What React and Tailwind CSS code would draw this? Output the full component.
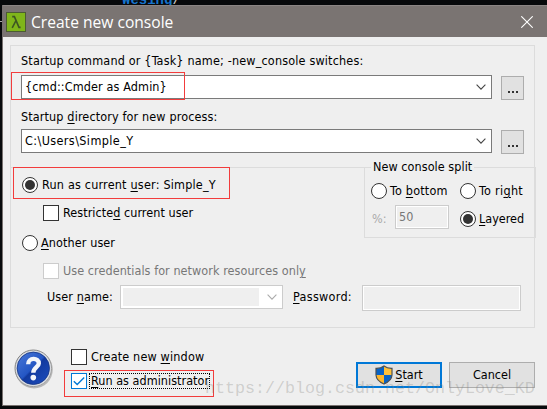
const ui = "whitespace-pre font-['DejaVu_Sans_Condensed','DejaVu_Sans',sans-serif] [font-stretch:condensed] text-[12.5px] leading-4";

function Label({ text, hot, color = "text-black", className = "" }) {
  const i = hot === undefined ? -1 : hot;
  return (
    <span className={`${ui} ${color} ${className}`}>
      {i < 0 ? text : (
        <>
          {text.slice(0, i)}
          <span className="underline decoration-1 underline-offset-2">{text[i]}</span>
          {text.slice(i + 1)}
        </>
      )}
    </span>
  );
}

function Radio({ checked }) {
  return (
    <span className="flex size-4 shrink-0 items-center justify-center rounded-full border border-[#333] bg-white">
      {checked && <span className="size-[10px] rounded-full bg-[#333]" />}
    </span>
  );
}

function Check({ className = "border-[#333]", checked }) {
  return (
    <span className={`flex size-4 shrink-0 items-center justify-center border bg-white ${className}`}>
      {checked && (
        <svg className="size-[14px] shrink-0" viewBox="0 0 14 14" fill="none" stroke="#0078d7" strokeWidth="1.4">
          <path d="M1.8 7.2 5.2 10.6 12.2 3.5" />
        </svg>
      )}
    </span>
  );
}

function Chevron({ color = "#444" }) {
  return (
    <svg className="h-[6px] w-[10px] shrink-0" viewBox="0 0 10 6" fill="none" stroke={color} strokeWidth="1.1">
      <path d="M.6.7 5 5.1 9.4.7" />
    </svg>
  );
}

function Combo({ text, className }) {
  return (
    <div className="flex h-[25px]">
      <div className="flex h-6 w-[471px] items-center justify-between border border-[#7a7a7a] bg-white pl-[3px] pr-[5px]">
        <Label text={text} className={className} />
        <Chevron />
      </div>
      <div className="ml-[9px] mt-px flex h-6 w-[23px] items-end justify-center gap-[2px] border border-[#adadad] bg-[#e1e1e1] pb-[6px]">
        <i className="size-[2px] bg-[#333]" />
        <i className="size-[2px] bg-[#333]" />
        <i className="size-[2px] bg-[#333]" />
      </div>
    </div>
  );
}

function HelpIcon() {
  return (
    <svg className="size-10" viewBox="0 0 40 40">
      <defs>
        <linearGradient id="ball" x1="0" y1="0" x2="1" y2="1">
          <stop offset="0" stopColor="#4b79d8" />
          <stop offset=".48" stopColor="#2456c4" />
          <stop offset=".52" stopColor="#123a9f" />
          <stop offset="1" stopColor="#1d4ec0" />
        </linearGradient>
        <linearGradient id="rim" x1="0" y1="0" x2="1" y2="1">
          <stop offset="0" stopColor="#777" />
          <stop offset="1" stopColor="#aaa" />
        </linearGradient>
      </defs>
      <circle cx="20" cy="20.6" r="18.8" fill="#b8b8b8" />
      <circle cx="19.3" cy="19.3" r="18.3" fill="#d9dce1" stroke="url(#rim)" strokeWidth="1" />
      <circle cx="19.3" cy="19.3" r="16.2" fill="url(#ball)" stroke="#163684" strokeWidth=".8" />
      <path d="M14.2 15.3C14 8.2 25 8.2 24.8 14.4 24.7 18.3 19.4 18.2 19.3 23.8" fill="none" stroke="#f3f5fa" strokeWidth="4.4" />
      <circle cx="19.3" cy="28.6" r="2.8" fill="#f3f5fa" />
    </svg>
  );
}

function Shield() {
  return (
    <svg className="h-5 w-[18px] shrink-0" viewBox="0 0 18 20">
      <defs>
        <clipPath id="shield"><path d="M9 1C6.7 2.8 4 3.4 1 3.3V10C1.2 14 4.2 17 9 19 13.8 17 16.8 14 17 10V3.3C14 3.4 11.3 2.8 9 1Z" /></clipPath>
      </defs>
      <g clipPath="url(#shield)">
        <path d="M0 0H9V10H0Z" fill="#0862c4" />
        <path d="M9 0H18V10H9Z" fill="#ffc038" />
        <path d="M0 10H9V20H0Z" fill="#fdb62c" />
        <path d="M9 10H18V20H9Z" fill="#0862c4" />
      </g>
      <path d="M9 1C6.7 2.8 4 3.4 1 3.3V10C1.2 14 4.2 17 9 19 13.8 17 16.8 14 17 10V3.3C14 3.4 11.3 2.8 9 1Z" fill="none" stroke="#4c5052" strokeWidth="1.2" />
    </svg>
  );
}

export default function App() {
  return (
    <div className="relative h-[409px] w-[547px] overflow-hidden bg-[#07090b] pl-[2px] pt-[5px]">
      <div className="absolute -top-[7px] left-[122px] whitespace-pre font-['Liberation_Mono',monospace] text-[14px] font-bold leading-[15px] text-[#1673cc]">Wesing<span className="font-normal text-[#ccc]">/</span></div>
      <div className="absolute left-0 top-[21px] h-px w-[2px] bg-[#aaa]" />
      <div className="relative h-[401px] w-[545px] border-b border-l border-[#77716f] bg-[#efefef]">
        <header className="flex h-8 items-center border-t border-[#8b8584] bg-[#7a7472] pl-[3px] pr-[14px]">
          <div className="flex size-5 items-center justify-center border border-[#4b5c32] bg-[#7fb51a]">
            <svg className="h-[14px] w-3" viewBox="0 0 12 14" fill="none" stroke="#3d5522" strokeWidth="1.6">
              <path d="M2.2 1.6H4.4L9 12.4H10.6M6 5.5 2.2 12.8" />
            </svg>
          </div>
          <h1 className="ml-[5px] grow whitespace-pre font-['Open_Sans','Noto_Sans',sans-serif] text-[15.6px] leading-5 text-white">Create new console</h1>
          <svg className="size-3" viewBox="0 0 12 12" fill="none" stroke="#fff" strokeWidth="1.1"><path d="M.3.3 11.7 11.7M11.7.3.3 11.7" /></svg>
        </header>

        <main className="ml-[7px] mt-2 h-[283px] w-[525px] border border-[#dcdcdc]">
          <div className="flex h-[121px] flex-col pl-[10px] pt-[7px]">
            <Label text="Startup command or {Task} name; -new_console switches:" className="tracking-[0.17px]" />
            <div className="mt-[6px]"><Combo text="{cmd::Cmder as Admin}" className="tracking-[0.12px]" /></div>
            <Label text="Startup directory for new process:" hot={8} className="mt-[9px] tracking-[0.13px]" />
            <div className="mt-[4px]"><Combo text="C:\Users\Simple_Y" className="tracking-[0.4px]" /></div>
          </div>
          <div className="flex">
            <section className="flex h-[116px] w-[353px] shrink-0 flex-col border-t border-[#dcdcdc] pl-[11px] pt-[9px]">
              <div className="flex items-center gap-[4px]"><Radio checked /><Label text="Run as current user: Simple_Y" hot={15} className="tracking-[0.2px]" /></div>
              <div className="ml-[21px] mt-3 flex items-center gap-1"><Check /><Label text="Restricted current user" hot={9} className="tracking-[0.05px]" /></div>
              <div className="mt-[14px] flex items-center gap-[3px]"><Radio /><Label text="Another user" hot={0} className="tracking-[0.1px]" /></div>
              <div className="ml-[21px] mt-3 flex items-center gap-1"><Check className="border-[#ccc]" /><Label text="Use credentials for network resources only" hot={41} color="text-[#777]" className="tracking-[0.06px]" /></div>
            </section>
            <section className="h-[71px] w-[172px] shrink-0 border border-[#dcdcdc]">
              <div className="-mt-[9px] ml-[6px] flex w-[103px] bg-[#efefef] pl-[2px]"><Label text="New console split" className="tracking-[0.06px]" /></div>
              <div className="ml-[6px] mt-[8px] flex">
                <div className="flex w-[89px] items-center gap-[3px]"><Radio /><Label text="To bottom" hot={3} className="tracking-[0.2px]" /></div>
                <div className="flex items-center gap-[3px]"><Radio /><Label text="To right" hot={5} className="tracking-[0.3px]" /></div>
              </div>
              <div className="ml-[7px] mt-[6px] flex items-start">
                <Label text="%:" color="text-[#aaa]" className="mt-[6px] w-[23px]" />
                <div className="flex h-6 w-[54px] items-start border border-[#ccc] bg-[#efefef] pl-[3px] pt-[3px] ring-1 ring-inset ring-white"><Label text="50" color="text-[#777]" /></div>
                <div className="ml-[11px] mt-[6px] flex items-center gap-[3px]"><Radio checked /><Label text="Layered" hot={0} /></div>
              </div>
            </section>
          </div>
          <div className="ml-9 mt-[2px] flex items-start">
            <Label text="User name:" hot={5} className="mt-1 w-[73px] tracking-[0.1px]" />
            <div className="flex h-6 w-[163px] items-center justify-between border border-[#ccc] bg-white pl-[2px] pr-[5px]">
              <div className="h-[18px] w-[136px] bg-[#efefef]" />
              <Chevron color="#aaa" />
            </div>
            <Label text="Password:" hot={0} className="ml-[10px] mt-1 w-[69px] tracking-[0.3px]" />
            <div className="h-[26px] w-[159px] border border-[#ccc] bg-[#efefef] shadow-[inset_0_0_0_1px_white]" />
          </div>
        </main>

        <footer className="flex pl-[11px] pt-[21px]">
          <HelpIcon />
          <div className="ml-[17px] flex w-[285px] flex-col">
            <div className="flex items-center gap-1"><Check /><Label text="Create new window" hot={11} className="tracking-[0.17px]" /></div>
            <div className="mt-2 flex items-center gap-[2px]">
              <Check checked className="border-[#0078d7]" />
              <span className="flex h-4 w-[121px] items-center border border-dotted border-black pl-px"><Label text="Run as administrator" hot={0} className="tracking-[0.03px]" /></span>
            </div>
          </div>
          <button className="mt-[13px] flex h-[26px] w-[86px] items-center justify-center gap-[2px] border-2 border-[#0078d7] bg-[#e1e1e1]"><Shield /><Label text="Start" hot={0} /></button>
          <button className="ml-[7px] mt-[13px] flex h-[26px] w-[86px] items-center justify-center border border-[#adadad] bg-[#e1e1e1]"><Label text="Cancel" /></button>
        </footer>
      </div>

      <div className="absolute left-[11px] top-[72px] h-7 w-[174px] border border-[#f23c3c]" />
      <div className="absolute left-[13px] top-[167px] h-8 w-[217px] border border-[#f23c3c]" />
      <div className="absolute left-[64px] top-[370px] h-[27px] w-[150px] border border-[#f23c3c]" />
      <div className="absolute left-[205px] top-[379px] whitespace-pre font-['Liberation_Mono',monospace] text-[16.66px] leading-5 text-[#80807a]/30">https://blog.csdn.net/OnlyLove_KD</div>
    </div>
  );
}
